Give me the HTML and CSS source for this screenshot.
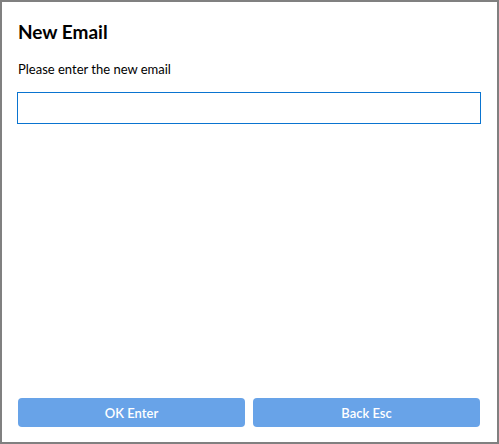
FILE: index.html
```html
<!DOCTYPE html>
<html>
<head>
<meta charset="utf-8">
<link rel="stylesheet" href="styles.css">
</head>
<body>
<div class="dialog">
  <h1 class="title">New Email</h1>
  <p class="prompt">Please enter the new email</p>
  <input class="field" type="text">
  <div class="spacer"></div>
  <div class="actions">
    <button class="btn">OK Enter</button>
    <button class="btn">Back Esc</button>
  </div>
</div>
</body>
</html>
```
FILE: styles.css
```css
html, body {
  margin: 0;
  padding: 0;
  background: #ffffff;
}
.dialog {
  box-sizing: border-box;
  width: 499px;
  height: 444px;
  border: 2px solid #808080;
  padding: 0 16px 15px 15px;
  display: flex;
  flex-direction: column;
  font-family: Lato, "Noto Sans", sans-serif;
  color: #000;
}
.title {
  margin: 18px 0 0 1px;
  font-size: 19px;
  line-height: 24px;
  font-weight: 700;
}
.prompt {
  margin: 16px 0 0 1px;
  font-size: 13px;
  line-height: 18px;
}
.field {
  box-sizing: border-box;
  margin: 14px 0 0 0;
  width: 464px;
  height: 32px;
  border: 1px solid #0a74d0;
  border-radius: 0;
  padding: 0 6px;
  outline: none;
  font-family: inherit;
  font-size: 14px;
}
.spacer {
  flex: 1;
}
.actions {
  display: flex;
  gap: 8px;
  margin: 0 1px;
}
.btn {
  flex: 1;
  height: 29px;
  border: none;
  border-radius: 4px;
  background: #68a3e8;
  color: #ffffff;
  font-family: inherit;
  font-size: 13px;
  font-weight: 600;
  padding: 0;
}
```
